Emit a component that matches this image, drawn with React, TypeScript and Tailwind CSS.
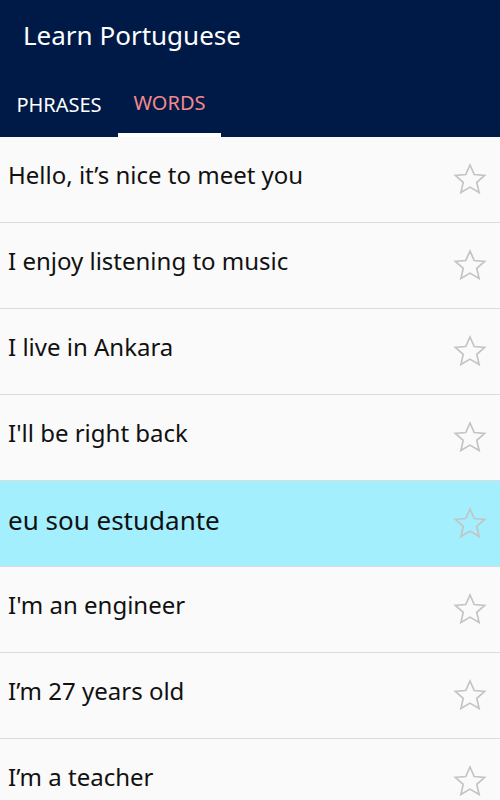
import { useState } from "react";

const PHRASES = [
  "Hello, it’s nice to meet you",
  "I enjoy listening to music",
  "I live in Ankara",
  "I'll be right back",
  "eu sou estudante",
  "I'm an engineer",
  "I’m 27 years old",
  "I’m a teacher",
];

function StarOutline() {
  return (
    <svg width="38" height="37" viewBox="0 0 24 24" fill="none">
      <path
        d="M12 2.6l2.75 6.2 6.75.6-5.1 4.45 1.5 6.6L12 16.95 6.1 20.45l1.5-6.6L2.5 9.4l6.75-.6z"
        stroke="#c4c4c4"
        strokeWidth="1.1"
        strokeLinejoin="miter"
      />
    </svg>
  );
}

export default function App() {
  const [tab, setTab] = useState<"phrases" | "words">("words");
  const [selected, setSelected] = useState(4);

  return (
    <div
      className="w-[500px] h-[800px] overflow-hidden bg-[#fafafa]"
      style={{ fontFamily: '"Noto Sans", "Open Sans", sans-serif' }}
    >
      {/* HEADER */}
      <div className="bg-[#001a47] h-[137px] flex flex-col">
        <h1 className="text-white text-[26px] pl-[23px] pt-[17px] leading-[36px]">
          Learn Portuguese
        </h1>

        {/* TABS */}
        <div className="flex mt-auto">
          <button
            onClick={() => setTab("phrases")}
            className={`w-[118px] h-[64px] flex items-center justify-center text-[20px] ${
              tab === "phrases" ? "text-[#f4898b] border-b-4 border-white" : "text-white"
            }`}
          >
            PHRASES
          </button>
          <button
            onClick={() => setTab("words")}
            className={`w-[103px] h-[64px] flex items-center justify-center text-[20px] ${
              tab === "words" ? "text-[#f4898b] border-b-4 border-white" : "text-white border-b-4 border-transparent"
            }`}
          >
            WORDS
          </button>
        </div>
      </div>

      {/* LIST */}
      <div>
        {PHRASES.map((p, i) => (
          <div
            key={i}
            onClick={() => setSelected(i)}
            className={`h-[86px] flex items-center justify-between border-b border-[#dcdcdc] pl-[8px] pr-[11px] ${
              selected === i ? "bg-[#a3effd]" : "bg-[#fafafa]"
            }`}
          >
            <span
              className={
                selected === i
                  ? "text-[#111] text-[26px] pb-[6px]"
                  : "text-[#111] text-[24px] pb-[10px]"
              }
            >
              {p}
            </span>
            <StarOutline />
          </div>
        ))}
      </div>
    </div>
  );
}
